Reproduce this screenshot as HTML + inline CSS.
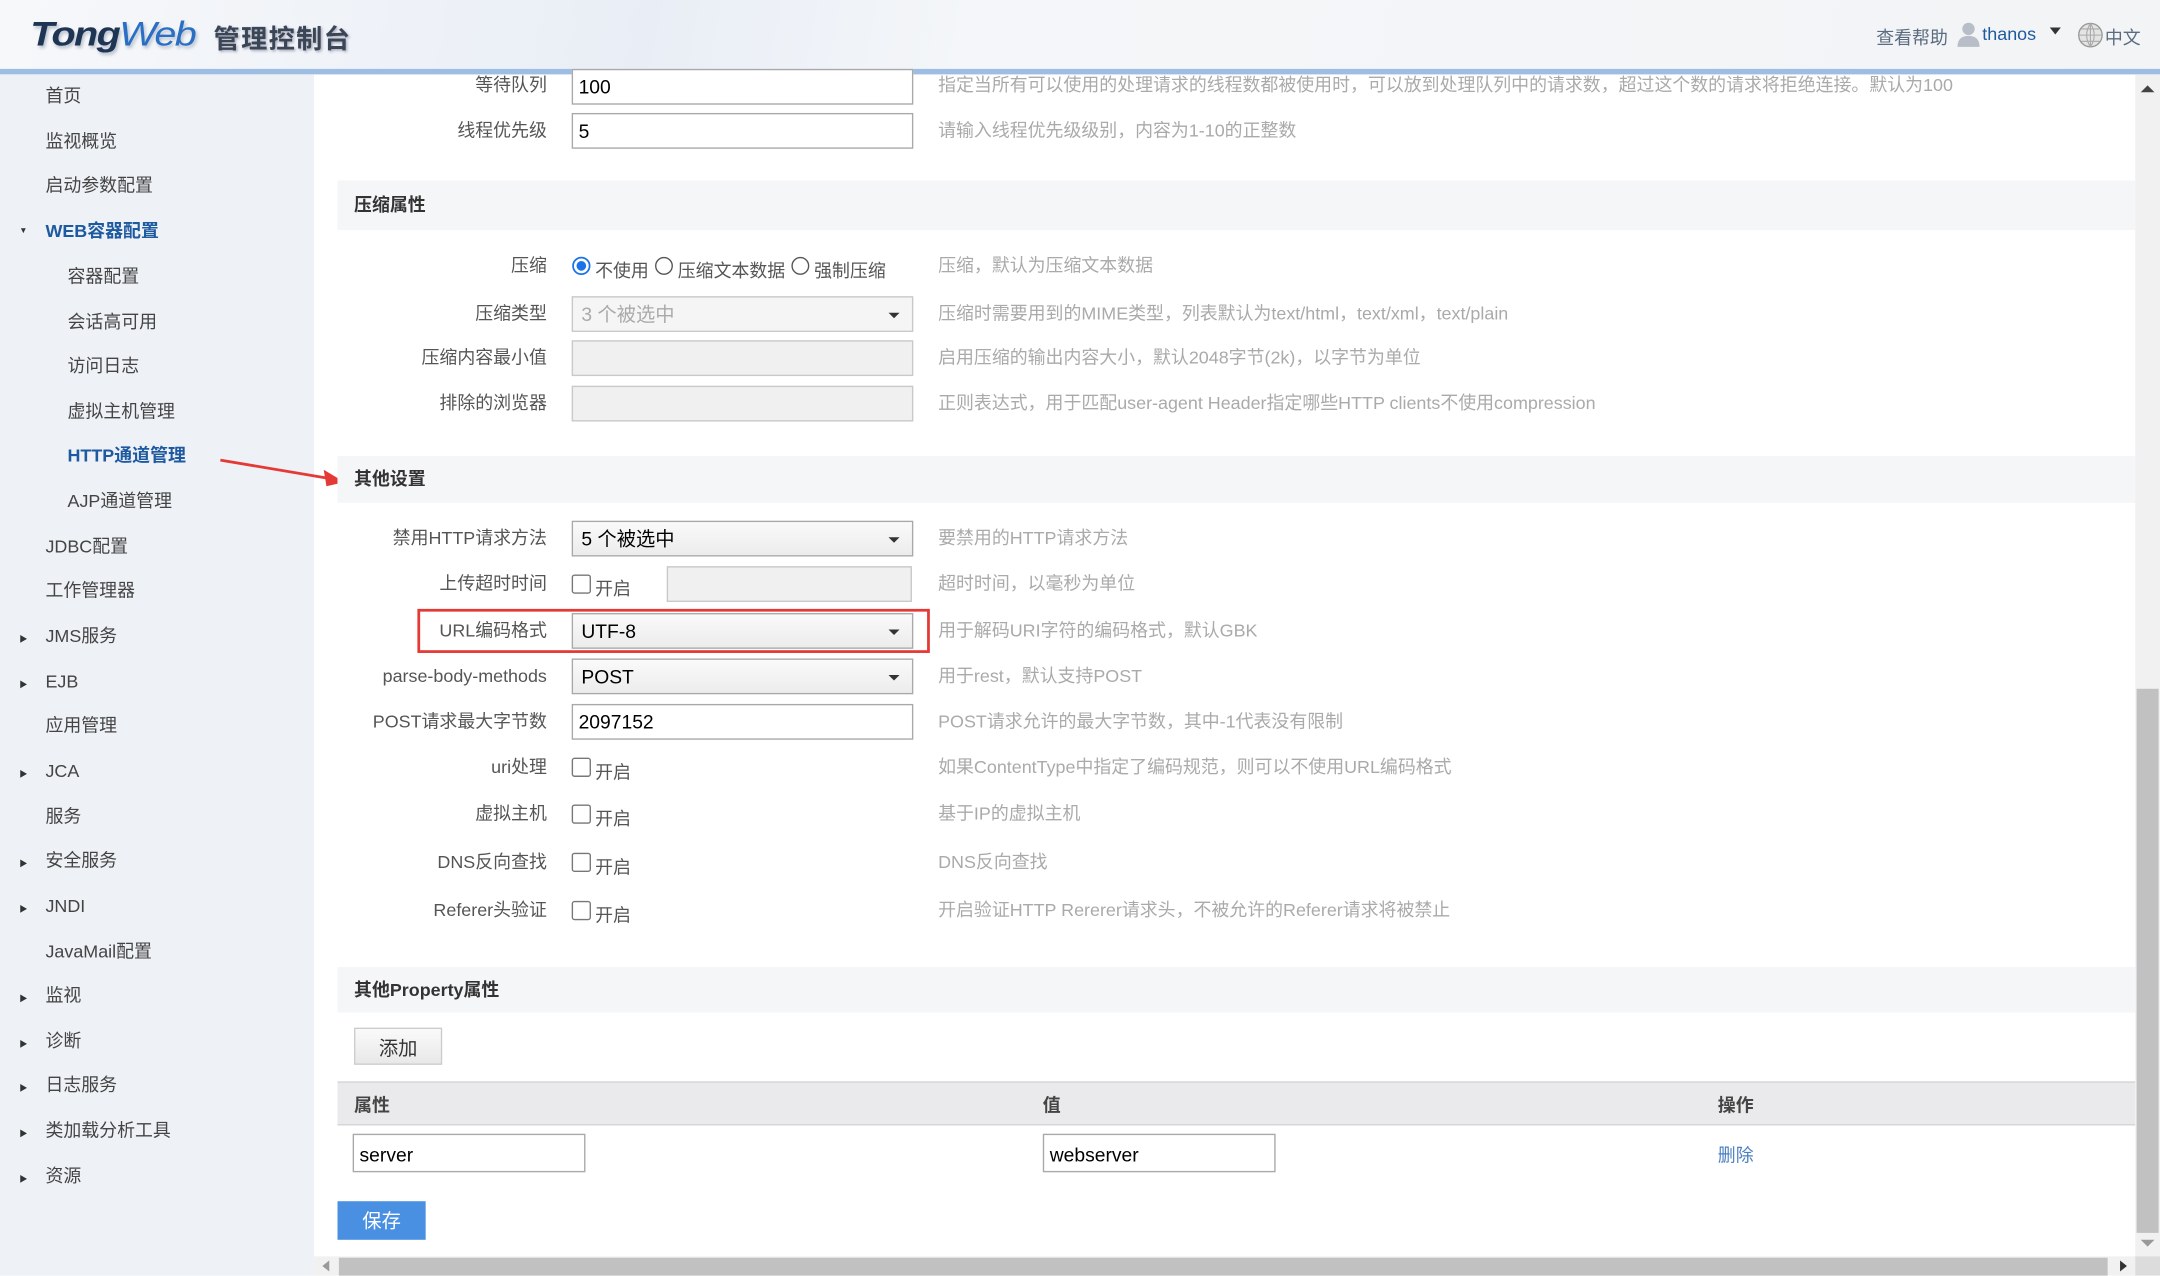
<!DOCTYPE html>
<html><head><meta charset="utf-8"><style>
html,body{margin:0;padding:0;overflow:hidden;background:#fff}
#w{position:absolute;left:0;top:0;width:1568px;height:926px;transform:scale(1.377551);transform-origin:0 0;font-family:"Liberation Sans","Noto Sans CJK SC",sans-serif;font-size:13px;color:#333}
.a{position:absolute;white-space:nowrap}
.hdr{left:0;top:0;width:1568px;height:50px;background:linear-gradient(100deg,#f7f8fa 0%,#e9eef6 30%,#f4f6f9 45%,#f3f4f6 100%)}
.bar{left:0;top:50px;width:1568px;height:4px;background:#9dbde2}
.side{left:0;top:54px;width:228px;height:872px;background:#eef1f6}
.si{position:absolute;font-size:13px;color:#444;line-height:16px}
.sub{left:49px}
.top{left:33px}
.tri{position:absolute;left:14px;font-size:6px;color:#333}
.sec{position:absolute;left:245px;width:1305px;background:#f5f6f8;font-weight:bold;font-size:13px;color:#333}
.lab{position:absolute;right:1171px;font-size:13px;color:#555;text-align:right;line-height:16px}
.inp{position:absolute;left:415px;border:1px solid #a9a9a9;background:#fff;font-size:14px;line-height:24px;padding-left:4px;box-sizing:border-box;width:248px;height:26px;color:#000}
.dis{background:#f0f0f0;border-color:#c9c9c9}
.sel{background:linear-gradient(#fafafa,#ececec);padding-left:6px}
.sel:after{content:"";position:absolute;right:9px;top:11px;border:4px solid transparent;border-top:4px solid #333;border-bottom:0}
.help{position:absolute;left:681px;font-size:13px;color:#aaa;line-height:16px}
.cb{position:absolute;left:415px;width:12px;height:12px;border:1px solid #777;border-radius:2px;background:#fff}
.cbt{position:absolute;left:432px;font-size:13px;color:#555}
</style></head><body><div id="w">
<div class="a hdr"></div>
<div class="a" style="left:22px;top:11px;font:italic 900 25px 'Liberation Sans',sans-serif;color:#1f3554;letter-spacing:-1px;transform:scaleX(1.15);transform-origin:0 0;text-shadow:1px 2px 2px #b8c0cc">Tong<span style="color:#2a6fc4;font-weight:normal">Web</span></div>
<div class="a" style="left:155px;top:14px;font-size:19px;font-weight:bold;color:#3a4656;letter-spacing:1px;text-shadow:1px 1px 2px #aab">管理控制台</div>
<div class="a" style="left:1362px;top:17px;font-size:13px;color:#5b6c80">查看帮助</div>
<svg class="a" style="left:1420px;top:15px" width="18" height="20" viewBox="0 0 18 20"><circle cx="9" cy="6" r="4.5" fill="#b8bec8"/><path d="M1 19 Q1 11 9 11 Q17 11 17 19Z" fill="#b8bec8"/></svg>
<div class="a" style="left:1439px;top:17px;font-size:13px;color:#1e5aa0">thanos</div>
<div class="a" style="left:1488px;top:20px;border:4px solid transparent;border-top:5px solid #333;border-bottom:0"></div>
<svg class="a" style="left:1508px;top:16px" width="19" height="19" viewBox="0 0 19 19"><circle cx="9.5" cy="9.5" r="8.5" fill="#e4e4e4" stroke="#999"/><path d="M1 9.5H18M9.5 1V18M3 5H16M3 14H16M9.5 1Q4 9.5 9.5 18M9.5 1Q15 9.5 9.5 18" stroke="#aaa" fill="none" stroke-width=".8"/></svg>
<div class="a" style="left:1528px;top:17px;font-size:13px;color:#5b6c80">中文</div>
<div class="a bar"></div>
<div class="a side"></div>
<div class="si top" style="top:62px">首页</div>
<div class="si top" style="top:95px">监视概览</div>
<div class="si top" style="top:127px">启动参数配置</div>
<div class="tri" style="top:165px">▼</div>
<div class="si top" style="top:160px;color:#1e5aa0;font-weight:bold">WEB容器配置</div>
<div class="si sub" style="top:193px">容器配置</div>
<div class="si sub" style="top:226px">会话高可用</div>
<div class="si sub" style="top:258px">访问日志</div>
<div class="si sub" style="top:291px">虚拟主机管理</div>
<div class="si sub" style="top:323px;color:#1e5aa0;font-weight:bold">HTTP通道管理</div>
<div class="si sub" style="top:356px">AJP通道管理</div>
<div class="si top" style="top:389px">JDBC配置</div>
<div class="si top" style="top:421px">工作管理器</div>
<div class="tri" style="top:459px">▶</div><div class="si top" style="top:454px">JMS服务</div>
<div class="tri" style="top:492px">▶</div><div class="si top" style="top:487px">EJB</div>
<div class="si top" style="top:519px">应用管理</div>
<div class="tri" style="top:557px">▶</div><div class="si top" style="top:552px">JCA</div>
<div class="si top" style="top:585px">服务</div>
<div class="tri" style="top:622px">▶</div><div class="si top" style="top:617px">安全服务</div>
<div class="tri" style="top:655px">▶</div><div class="si top" style="top:650px">JNDI</div>
<div class="si top" style="top:683px">JavaMail配置</div>
<div class="tri" style="top:720px">▶</div><div class="si top" style="top:715px">监视</div>
<div class="tri" style="top:753px">▶</div><div class="si top" style="top:748px">诊断</div>
<div class="tri" style="top:785px">▶</div><div class="si top" style="top:780px">日志服务</div>
<div class="tri" style="top:818px">▶</div><div class="si top" style="top:813px">类加载分析工具</div>
<div class="tri" style="top:851px">▶</div><div class="si top" style="top:846px">资源</div>

<svg class="a" style="left:155px;top:328px" width="100" height="30"><path d="M5 6 L88 20" stroke="#e53935" stroke-width="2"/><path d="M95 22 L80 13 L82 25Z" fill="#e53935"/></svg>

<div class="lab" style="top:54px">等待队列</div><div class="inp" style="top:50px">100</div>
<div class="help" style="top:54px">指定当所有可以使用的处理请求的线程数都被使用时，可以放到处理队列中的请求数，超过这个数的请求将拒绝连接。默认为100</div>
<div class="lab" style="top:87px">线程优先级</div><div class="inp" style="top:82px">5</div>
<div class="help" style="top:87px">请输入线程优先级级别，内容为1-10的正整数</div>

<div class="sec" style="top:131px;height:36px;line-height:36px;padding-left:12px;box-sizing:border-box">压缩属性</div>
<div class="lab" style="top:185px">压缩</div>
<svg class="a" style="left:415px;top:186px" width="14" height="14"><circle cx="7" cy="7" r="6" fill="#fff" stroke="#1a73e8" stroke-width="1.3"/><circle cx="7" cy="7" r="3.5" fill="#1a73e8"/></svg>
<div class="cbt" style="top:186px">不使用</div>
<svg class="a" style="left:475px;top:186px" width="14" height="14"><circle cx="7" cy="7" r="6" fill="#fff" stroke="#555"/></svg>
<div class="cbt" style="top:186px;left:492px">压缩文本数据</div>
<svg class="a" style="left:574px;top:186px" width="14" height="14"><circle cx="7" cy="7" r="6" fill="#fff" stroke="#555"/></svg>
<div class="cbt" style="top:186px;left:591px">强制压缩</div>
<div class="help" style="top:185px">压缩，默认为压缩文本数据</div>
<div class="lab" style="top:220px">压缩类型</div><div class="inp dis sel" style="top:215px;color:#aaa;background:#f5f5f5">3 个被选中</div>
<div class="help" style="top:220px">压缩时需要用到的MIME类型，列表默认为text/html，text/xml，text/plain</div>
<div class="lab" style="top:252px">压缩内容最小值</div><div class="inp dis" style="top:247px"></div>
<div class="help" style="top:252px">启用压缩的输出内容大小，默认2048字节(2k)，以字节为单位</div>
<div class="lab" style="top:285px">排除的浏览器</div><div class="inp dis" style="top:280px"></div>
<div class="help" style="top:285px">正则表达式，用于匹配user-agent Header指定哪些HTTP clients不使用compression</div>

<div class="sec" style="top:331px;height:34px;line-height:34px;padding-left:12px;box-sizing:border-box">其他设置</div>
<div class="lab" style="top:383px">禁用HTTP请求方法</div><div class="inp sel" style="top:378px">5 个被选中</div>
<div class="help" style="top:383px">要禁用的HTTP请求方法</div>
<div class="lab" style="top:416px">上传超时时间</div><div class="cb" style="top:417px"></div><div class="cbt" style="top:417px">开启</div>
<div class="inp dis" style="top:411px;left:484px;width:178px"></div>
<div class="help" style="top:416px">超时时间，以毫秒为单位</div>
<div class="a" style="left:303px;top:442px;width:368px;height:28px;border:2px solid #e53935"></div>
<div class="lab" style="top:450px">URL编码格式</div><div class="inp sel" style="top:445px">UTF-8</div>
<div class="help" style="top:450px">用于解码URI字符的编码格式，默认GBK</div>
<div class="lab" style="top:483px">parse-body-methods</div><div class="inp sel" style="top:478px">POST</div>
<div class="help" style="top:483px">用于rest，默认支持POST</div>
<div class="lab" style="top:516px">POST请求最大字节数</div><div class="inp" style="top:511px">2097152</div>
<div class="help" style="top:516px">POST请求允许的最大字节数，其中-1代表没有限制</div>
<div class="lab" style="top:549px">uri处理</div><div class="cb" style="top:550px"></div><div class="cbt" style="top:550px">开启</div>
<div class="help" style="top:549px">如果ContentType中指定了编码规范，则可以不使用URL编码格式</div>
<div class="lab" style="top:583px">虚拟主机</div><div class="cb" style="top:584px"></div><div class="cbt" style="top:584px">开启</div>
<div class="help" style="top:583px">基于IP的虚拟主机</div>
<div class="lab" style="top:618px">DNS反向查找</div><div class="cb" style="top:619px"></div><div class="cbt" style="top:619px">开启</div>
<div class="help" style="top:618px">DNS反向查找</div>
<div class="lab" style="top:653px">Referer头验证</div><div class="cb" style="top:654px"></div><div class="cbt" style="top:654px">开启</div>
<div class="help" style="top:653px">开启验证HTTP Rererer请求头，不被允许的Referer请求将被禁止</div>

<div class="sec" style="top:702px;height:33px;line-height:33px;padding-left:12px;box-sizing:border-box">其他Property属性</div>
<div class="a" style="left:257px;top:746px;width:64px;height:27px;border:1px solid #ccc;background:linear-gradient(#fafafa,#e8e8e8);text-align:center;line-height:29px;font-size:14px;box-sizing:border-box">添加</div>
<div class="a" style="left:245px;top:785px;width:1305px;height:32px;background:#eaeaec;border-top:1px solid #d4d4d4;border-bottom:1px solid #d4d4d4;box-sizing:border-box"></div>
<div class="a" style="left:257px;top:792px;font-weight:bold;color:#444">属性</div>
<div class="a" style="left:757px;top:792px;font-weight:bold;color:#444">值</div>
<div class="a" style="left:1247px;top:792px;font-weight:bold;color:#444">操作</div>
<div class="inp" style="top:823px;left:256px;width:169px;height:28px;line-height:28px">server</div>
<div class="inp" style="top:823px;left:757px;width:169px;height:28px;line-height:28px">webserver</div>
<div class="a" style="left:1247px;top:828px;color:#4a7fc1">删除</div>
<div class="a" style="left:245px;top:872px;width:64px;height:28px;background:#4a90e2;color:#fff;text-align:center;line-height:28px;font-size:14px">保存</div>

<div class="a" style="left:1550px;top:54px;width:18px;height:858px;background:#f1f1f1"></div>
<div class="a" style="left:1554px;top:62px;border:5px solid transparent;border-bottom:5px solid #444;border-top:0"></div>
<div class="a" style="left:1551px;top:500px;width:16px;height:395px;background:#c1c1c1"></div>
<div class="a" style="left:1554px;top:900px;border:5px solid transparent;border-top:5px solid #999;border-bottom:0"></div>
<div class="a" style="left:228px;top:912px;width:1322px;height:14px;background:#f1f1f1"></div>
<div class="a" style="left:246px;top:913px;width:1284px;height:13px;background:#c1c1c1"></div>
<div class="a" style="left:234px;top:915px;border:4px solid transparent;border-right:5px solid #999;border-left:0"></div>
<div class="a" style="left:1539px;top:915px;border:4px solid transparent;border-left:5px solid #333;border-right:0"></div>
<div class="a" style="left:1550px;top:912px;width:18px;height:14px;background:#dcdcdc"></div>
</div></body></html>
